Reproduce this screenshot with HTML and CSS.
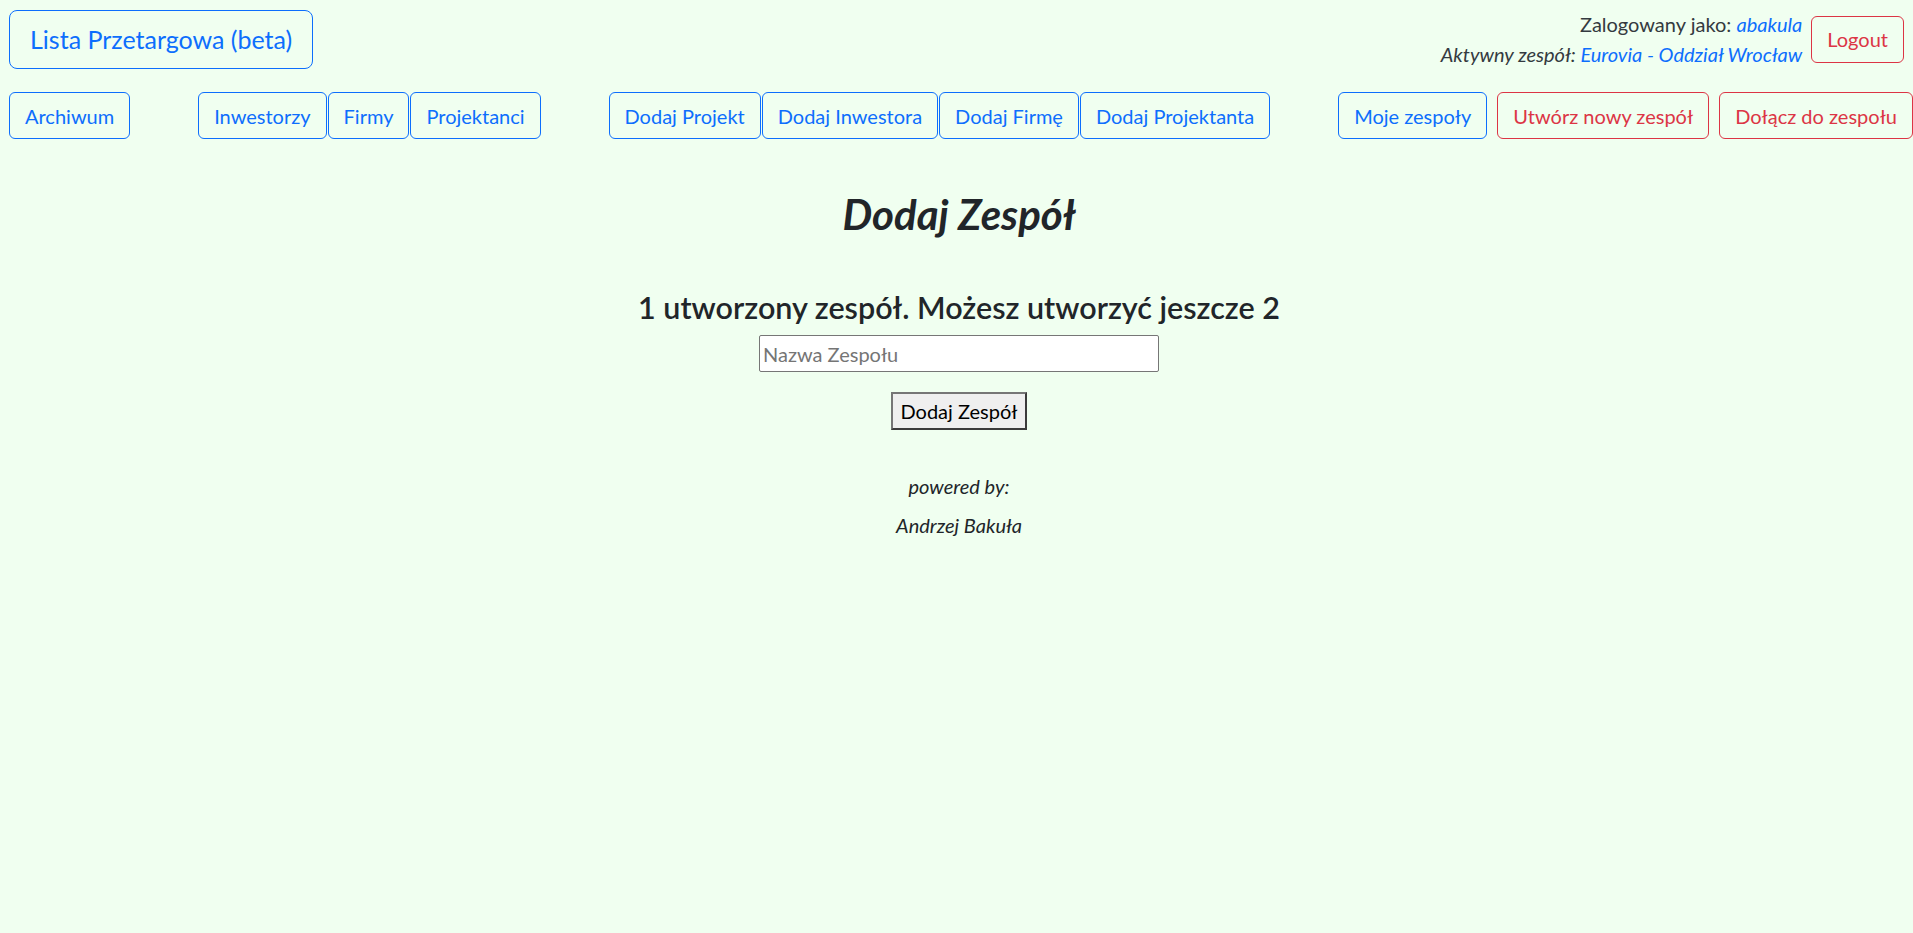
FILE: index.html
```html
<!DOCTYPE html>
<html lang="pl">
<head>
<meta charset="utf-8">
<title>Lista Przetargowa</title>
<link rel="stylesheet" href="styles.css">
</head>
<body>
<header class="topbar">
  <a class="btn btn-lg btn-outline-primary" href="#">Lista Przetargowa (beta)</a>
  <div class="user-area">
    <div class="user-info">
      <div>Zalogowany jako: <a class="link-i" href="#">abakula</a></div>
      <div><em>Aktywny zespół: </em><a class="link-i" href="#">Eurovia - Oddział Wrocław</a></div>
    </div>
    <a class="btn btn-outline-danger logout" href="#">Logout</a>
  </div>
</header>

<nav class="navrow">
  <div class="group">
    <a class="btn btn-outline-primary" href="#">Archiwum</a>
  </div>
  <div class="group tight">
    <a class="btn btn-outline-primary" href="#">Inwestorzy</a>
    <a class="btn btn-outline-primary" href="#">Firmy</a>
    <a class="btn btn-outline-primary" href="#">Projektanci</a>
  </div>
  <div class="group tight1">
    <a class="btn btn-outline-primary" href="#">Dodaj Projekt</a>
    <a class="btn btn-outline-primary" href="#">Dodaj Inwestora</a>
    <a class="btn btn-outline-primary" href="#">Dodaj Firmę</a>
    <a class="btn btn-outline-primary" href="#">Dodaj Projektanta</a>
  </div>
  <div class="group spaced">
    <a class="btn btn-outline-primary" href="#">Moje zespoły</a>
    <a class="btn btn-outline-danger" href="#">Utwórz nowy zespół</a>
    <a class="btn btn-outline-danger" href="#">Dołącz do zespołu</a>
  </div>
</nav>

<main class="content">
  <h1 class="title">Dodaj Zespół</h1>
  <h4 class="subtitle">1 utworzony zespół. Możesz utworzyć jeszcze 2</h4>
  <form class="team-form" onsubmit="return false">
    <input class="team-input" type="text" placeholder="Nazwa Zespołu">
    <button class="team-submit" type="submit">Dodaj Zespół</button>
  </form>
  <footer class="powered">
    <p>powered by:</p>
    <p>Andrzej Bakuła</p>
  </footer>
</main>
</body>
</html>
```
FILE: styles.css
```css
* { box-sizing: border-box; }

html, body { margin: 0; }

body {
  background: #f0fff0;
  color: #212529;
  font-family: "Lato", "Open Sans", sans-serif;
  font-size: 20px;
  line-height: 1.5;
}

a { text-decoration: none; }

.btn {
  display: inline-block;
  font-size: 20px;
  line-height: 30px;
  padding: 7.5px 15px;
  border: 1px solid;
  border-radius: 6px;
  background: transparent;
  white-space: nowrap;
}

.btn-lg {
  font-size: 25px;
  line-height: 37px;
  padding: 10px 20px;
  border-radius: 8px;
}

.btn-outline-primary { color: #0d6efd; border-color: #0d6efd; }
.btn-outline-danger { color: #dc3545; border-color: #dc3545; }

.topbar {
  display: flex;
  justify-content: space-between;
  align-items: center;
  padding: 9px 9px 0 9px;
}

.user-area {
  display: flex;
  align-items: center;
  gap: 9px;
}

.user-info {
  text-align: right;
  line-height: 30px;
  color: #343a40;
}

.user-info em { font-style: italic; }

.link-i { color: #0d6efd; font-style: italic; }

.navrow {
  display: flex;
  justify-content: space-between;
  margin-top: 23px;
  padding-left: 9px;
}

.group { display: flex; }
.group.tight { gap: 1px; }
.group.tight1 { gap: 1px; }
.group.spaced { gap: 10px; }

.content {
  padding-left: 5px;
  text-align: center;
}

.title {
  margin: 50px 0 0;
  font-size: 42px;
  line-height: 50px;
  font-style: italic;
  font-weight: 700;
}

.subtitle {
  margin: 50px 0 0;
  font-size: 30.5px;
  line-height: 36px;
  font-weight: 600;
}

.team-form {
  display: flex;
  flex-direction: column;
  align-items: center;
  margin-top: 10px;
}

.team-input {
  width: 400px;
  height: 37px;
  padding: 1px 3px;
  border: 1px solid #767676;
  border-radius: 2px;
  background: #fff;
  font-family: inherit;
  font-size: 20px;
  color: #212529;
}

.team-input::placeholder { color: #757575; }

.team-submit {
  margin-top: 20px;
  height: 38px;
  padding: 2px 8px;
  border: 2px solid;
  border-color: #767676 #3b3b3b #3b3b3b #767676;
  border-radius: 0;
  background: #efefef;
  font-family: inherit;
  font-size: 20px;
  line-height: 30px;
  color: #000;
}

.powered {
  margin-top: 41px;
  font-style: italic;
}

.powered p {
  margin: 0 0 9px;
  line-height: 30px;
}
```
